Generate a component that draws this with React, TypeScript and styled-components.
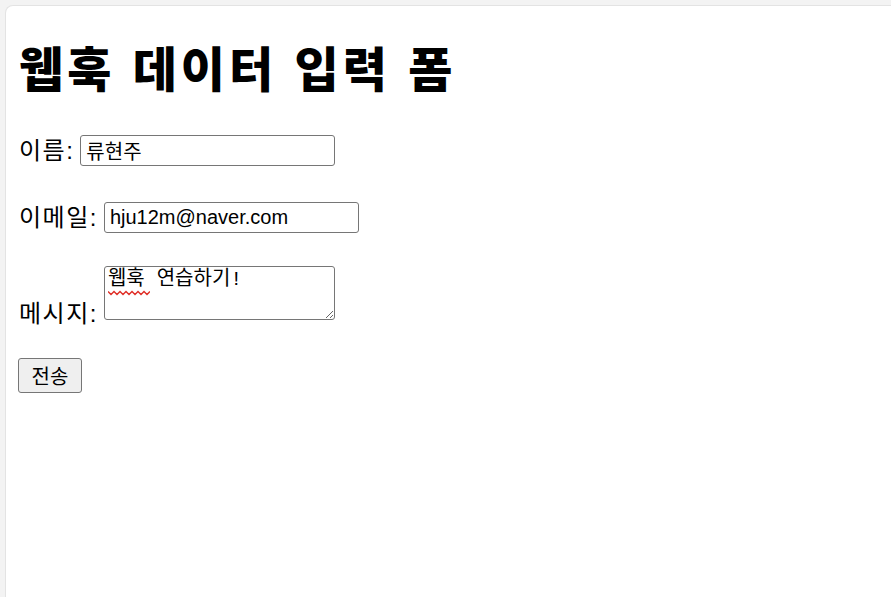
import styled, { createGlobalStyle } from 'styled-components';

const GlobalStyle = createGlobalStyle`
  html, body {
    margin: 0;
    padding: 0;
    height: 100%;
    background: #f3f3f3;
  }
  #root {
    height: 100%;
  }
`;

const Frame = styled.div`
  height: 100vh;
  box-sizing: border-box;
  padding: 5px 0 0 5px;
  background: #f3f3f3;
  display: flex;
`;

const Panel = styled.main`
  flex: 1;
  background: #ffffff;
  border-top: 1px solid #e3e3e3;
  border-left: 1px solid #e3e3e3;
  border-top-left-radius: 8px;
  padding: 0 13px;
  font-family: 'Liberation Sans', 'Noto Sans CJK KR', sans-serif;
  color: #000;
`;

const Title = styled.h1`
  margin: 36px 0 0;
  font-size: 48px;
  line-height: 58px;
  font-weight: 900;
  font-family: 'Liberation Sans', 'Noto Sans CJK KR', sans-serif;
  letter-spacing: 4px;
`;

const Form = styled.form`
  display: flex;
  flex-direction: column;
  align-items: flex-start;
`;

const Row = styled.div<{ $top: number; $bottom?: boolean }>`
  display: flex;
  align-items: ${(p) => (p.$bottom ? 'flex-end' : 'center')};
  gap: 6px;
  margin-top: ${(p) => p.$top}px;
`;

const Label = styled.label<{ $drop?: number }>`
  font-size: 24px;
  line-height: 24px;
  letter-spacing: 1.5px;
  margin-bottom: ${(p) => -(p.$drop ?? 0)}px;
`;

const TextInput = styled.input`
  box-sizing: border-box;
  width: 255px;
  height: 31px;
  padding: 1px 5px;
  border: 1px solid #767676;
  border-radius: 3px;
  font-family: 'Liberation Sans', 'Noto Sans CJK KR', sans-serif;
  font-size: 20px;
  color: #000;
  background: #fff;
  outline: none;
`;

const AreaWrap = styled.div`
  position: relative;
  display: flex;
`;

const Area = styled.textarea`
  box-sizing: border-box;
  width: 231px;
  height: 54px;
  padding: 1px 3px;
  border: 1px solid #767676;
  border-radius: 3px;
  font-family: 'Liberation Mono', 'Noto Sans CJK KR', monospace;
  font-size: 20px;
  line-height: 24px;
  color: #000;
  background: #fff;
  outline: none;
  resize: both;
`;

const SpellMark = styled.svg`
  position: absolute;
  left: 4px;
  top: 24px;
  pointer-events: none;
`;

const SubmitButton = styled.button`
  box-sizing: border-box;
  margin: 38px 0 0 -1px;
  width: 64px;
  height: 35px;
  padding: 0;
  border: 1px solid #767676;
  border-radius: 3px;
  background: #efefef;
  font-family: 'Liberation Sans', 'Noto Sans CJK KR', sans-serif;
  font-size: 20px;
  color: #000;
`;

export default function App() {
  return (
    <>
      <GlobalStyle />
      <Frame>
        <Panel>
          <Title>웹훅 데이터 입력 폼</Title>
          <Form onSubmit={(e) => e.preventDefault()}>
            <Row $top={35}>
              <Label htmlFor="name">이름:</Label>
              <TextInput id="name" type="text" defaultValue="류현주" />
            </Row>
            <Row $top={36}>
              <Label htmlFor="email">이메일:</Label>
              <TextInput id="email" type="email" defaultValue="hju12m@naver.com" />
            </Row>
            <Row $top={33} $bottom>
              <Label htmlFor="message" $drop={6}>
                메시지:
              </Label>
              <AreaWrap>
                <Area id="message" defaultValue="웹훅 연습하기!" spellCheck={false} />
                <SpellMark width="42" height="6" viewBox="0 0 42 6">
                  <path
                    d="M0 1.5 L3 4.5 L6 1.5 L9 4.5 L12 1.5 L15 4.5 L18 1.5 L21 4.5 L24 1.5 L27 4.5 L30 1.5 L33 4.5 L36 1.5 L39 4.5 L42 1.5"
                    fill="none"
                    stroke="#e0312a"
                    strokeWidth="1.5"
                  />
                </SpellMark>
              </AreaWrap>
            </Row>
            <SubmitButton type="submit">전송</SubmitButton>
          </Form>
        </Panel>
      </Frame>
    </>
  );
}
